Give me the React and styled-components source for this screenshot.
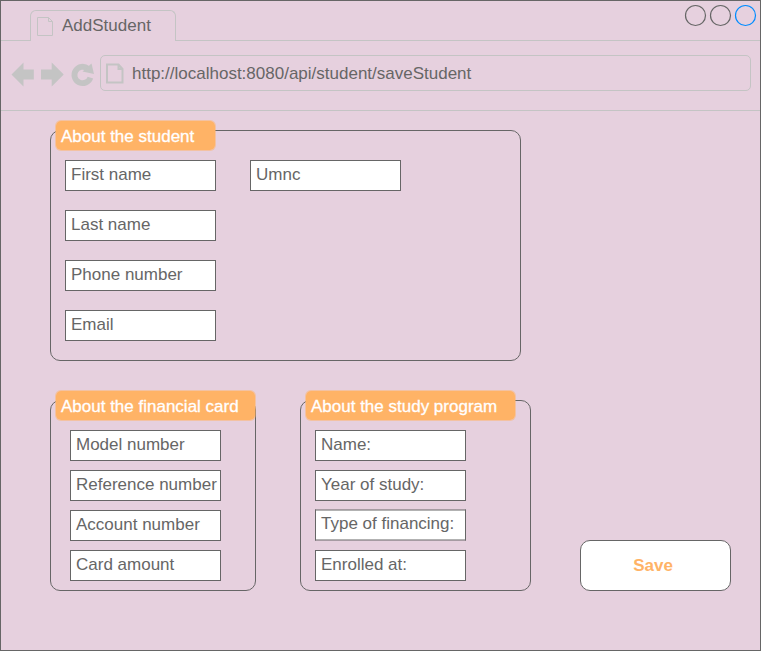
import React from "react";
import styled, { createGlobalStyle } from "styled-components";

const INK = "#666666";
const CHROME = "#c4c4c4";
const PINK = "#e6d0de";
const ORANGE = "#ffb366";

const GlobalStyle = createGlobalStyle`
  *, *::before, *::after { box-sizing: border-box; }
  body { margin: 0; background: ${PINK}; }
`;

const Window = styled.div`
  width: 761px;
  height: 651px;
  border: 1px solid ${INK};
  background: ${PINK};
  color: ${INK};
  font: 17px/20px "Liberation Sans", Arial, Helvetica, sans-serif;
  overflow: hidden;
`;

const TabStrip = styled.header`
  display: flex;
  align-items: flex-end;
  height: 40px;
`;

const StripLine = styled.div`
  width: ${(p) => p.$width || "auto"};
  flex: ${(p) => (p.$width ? "none" : 1)};
  height: 40px;
  border-bottom: 1px solid ${CHROME};
  display: flex;
  justify-content: flex-end;
  gap: 3px;
  padding: 3px 4px 0 0;
`;

const Tab = styled.div`
  display: flex;
  width: 146px;
  height: 31px;
  padding: 5px 0 0 6px;
  gap: 8px;
  border: 1px solid ${CHROME};
  border-bottom: 0;
  border-radius: 6px 6px 0 0;
`;

const Toolbar = styled.nav`
  display: flex;
  height: 70px;
  padding: 14px 9px 0 9px;
  border-bottom: 1px solid ${CHROME};
`;

const NavIcons = styled.svg`
  flex: none;
  width: 90px;
  height: 36px;
`;

const AddressBar = styled.div`
  display: flex;
  flex: 1;
  height: 36px;
  padding: 8px 0 0 5px;
  gap: 7px;
  border: 1px solid ${CHROME};
  border-radius: 5px;
`;

const Icon = styled.svg`
  display: block;
  flex: none;
  overflow: visible;
`;

const Page = styled.main`
  display: flex;
  flex-direction: column;
  gap: 39px;
  padding: 19px 0 0 49px;
`;

const BottomRow = styled.div`
  display: flex;
  align-items: flex-end;
`;

const Panel = styled.section`
  position: relative;
  display: flex;
  gap: 34px;
  width: ${(p) => p.$width}px;
  height: ${(p) => p.$height}px;
  margin-right: ${(p) => p.$after || 0}px;
  padding: 29px 0 0 ${(p) => p.$inset}px;
  border: 1px solid ${INK};
  border-radius: 10px;
`;

const PanelTitle = styled.h2`
  position: absolute;
  top: -11px;
  left: 4px;
  width: ${(p) => p.$width}px;
  height: 31px;
  margin: 0;
  padding: 6px 0 0 5px;
  border: 1px solid rgba(255, 179, 102, 0.5);
  border-radius: 6px;
  background: ${ORANGE} padding-box;
  color: #ffffff;
  font: inherit;
  -webkit-text-stroke: 0.3px #ffffff;
  white-space: nowrap;
`;

const FieldColumn = styled.div`
  display: flex;
  flex-direction: column;
  gap: ${(p) => p.$gap}px;
`;

const Field = styled.div`
  width: 151px;
  height: 31px;
  padding: 4px 0 0 5px;
  border: 1px solid ${INK};
  background: #ffffff;
  white-space: nowrap;
`;

/* A field raised by half a pixel, with softened horizontal edges. */
const RaisedField = styled(Field)`
  height: 32px;
  margin-top: -1px;
  border-top-color: #a69ba2;
  border-bottom-color: #a69ba2;
  box-shadow: inset 0 1px #b2b2b2, inset 0 -1px #b2b2b2;
`;

const SaveButton = styled.button`
  width: 151px;
  height: 51px;
  padding: 0 5px 0 0;
  border: 1px solid ${INK};
  border-radius: 10px;
  background: #ffffff;
  color: ${ORANGE};
  font: bold 17px/20px "Liberation Sans", Arial, Helvetica, sans-serif;
`;

const WindowDot = ({ color = INK }) => (
  <Icon width="22" height="22" viewBox="0 0 22 22">
    <circle cx="11.5" cy="11.5" r="10" fill="none" stroke={color} strokeWidth="1.2" />
  </Icon>
);

const TabPageIcon = () => (
  <Icon width="17" height="20" viewBox="0 0 17 20">
    <path d="M.5 1.5h11l4 4v14H.5zM11.5 1.5v4h4" fill="none" stroke={CHROME} />
  </Icon>
);

const AddressPageIcon = () => (
  <Icon width="19" height="20" viewBox="0 0 19 20">
    <path d="M1 .5h11.5l4 4.5v13.5H1zM12.5 .5v4.5h4" fill="none" stroke={CHROME} strokeWidth="2" />
  </Icon>
);

const Fields = ({ gap, labels, raised }) => (
  <FieldColumn $gap={gap}>
    {labels.map((label) =>
      label === raised ? (
        <RaisedField key={label}>{label}</RaisedField>
      ) : (
        <Field key={label}>{label}</Field>
      )
    )}
  </FieldColumn>
);

export default function App() {
  return (
    <>
      <GlobalStyle />
      <Window>
        <TabStrip>
          <StripLine $width="29px" />
          <Tab>
            <TabPageIcon />
            AddStudent
          </Tab>
          <StripLine>
            <WindowDot />
            <WindowDot />
            <WindowDot color="#008cff" />
          </StripLine>
        </TabStrip>
        <Toolbar>
          <NavIcons viewBox="10 55 90 36">
            <path
              d="M11.5 74.5L23.5 62.5V69.5H33.8V79.5H23.5V86.5zM63.7 74.5L51.7 62.5V69.5H41V79.5H51.7V86.5z"
              fill={CHROME}
            />
            <path d="M87.8 68.6A8.2 8.2 0 1 0 90.4 77.6" fill="none" stroke={CHROME} strokeWidth="5.8" />
            <path d="M91.5 63.5L94 74L82.5 71.5z" fill={CHROME} />
          </NavIcons>
          <AddressBar>
            <AddressPageIcon />
            http://localhost:8080/api/student/saveStudent
          </AddressBar>
        </Toolbar>
        <Page>
          <Panel $width={471} $height={231} $inset={14}>
            <PanelTitle $width={161}>About the student</PanelTitle>
            <Fields gap={19} labels={["First name", "Last name", "Phone number", "Email"]} />
            <Fields gap={19} labels={["Umnc"]} />
          </Panel>
          <BottomRow>
            <Panel $width={206} $height={191} $inset={19} $after={44}>
              <PanelTitle $width={201}>About the financial card</PanelTitle>
              <Fields gap={9} labels={["Model number", "Reference number", "Account number", "Card amount"]} />
            </Panel>
            <Panel $width={231} $height={191} $inset={14} $after={49}>
              <PanelTitle $width={211}>About the study program</PanelTitle>
              <Fields
                gap={9}
                labels={["Name:", "Year of study:", "Type of financing:", "Enrolled at:"]}
                raised="Type of financing:"
              />
            </Panel>
            <SaveButton>Save</SaveButton>
          </BottomRow>
        </Page>
      </Window>
    </>
  );
}
